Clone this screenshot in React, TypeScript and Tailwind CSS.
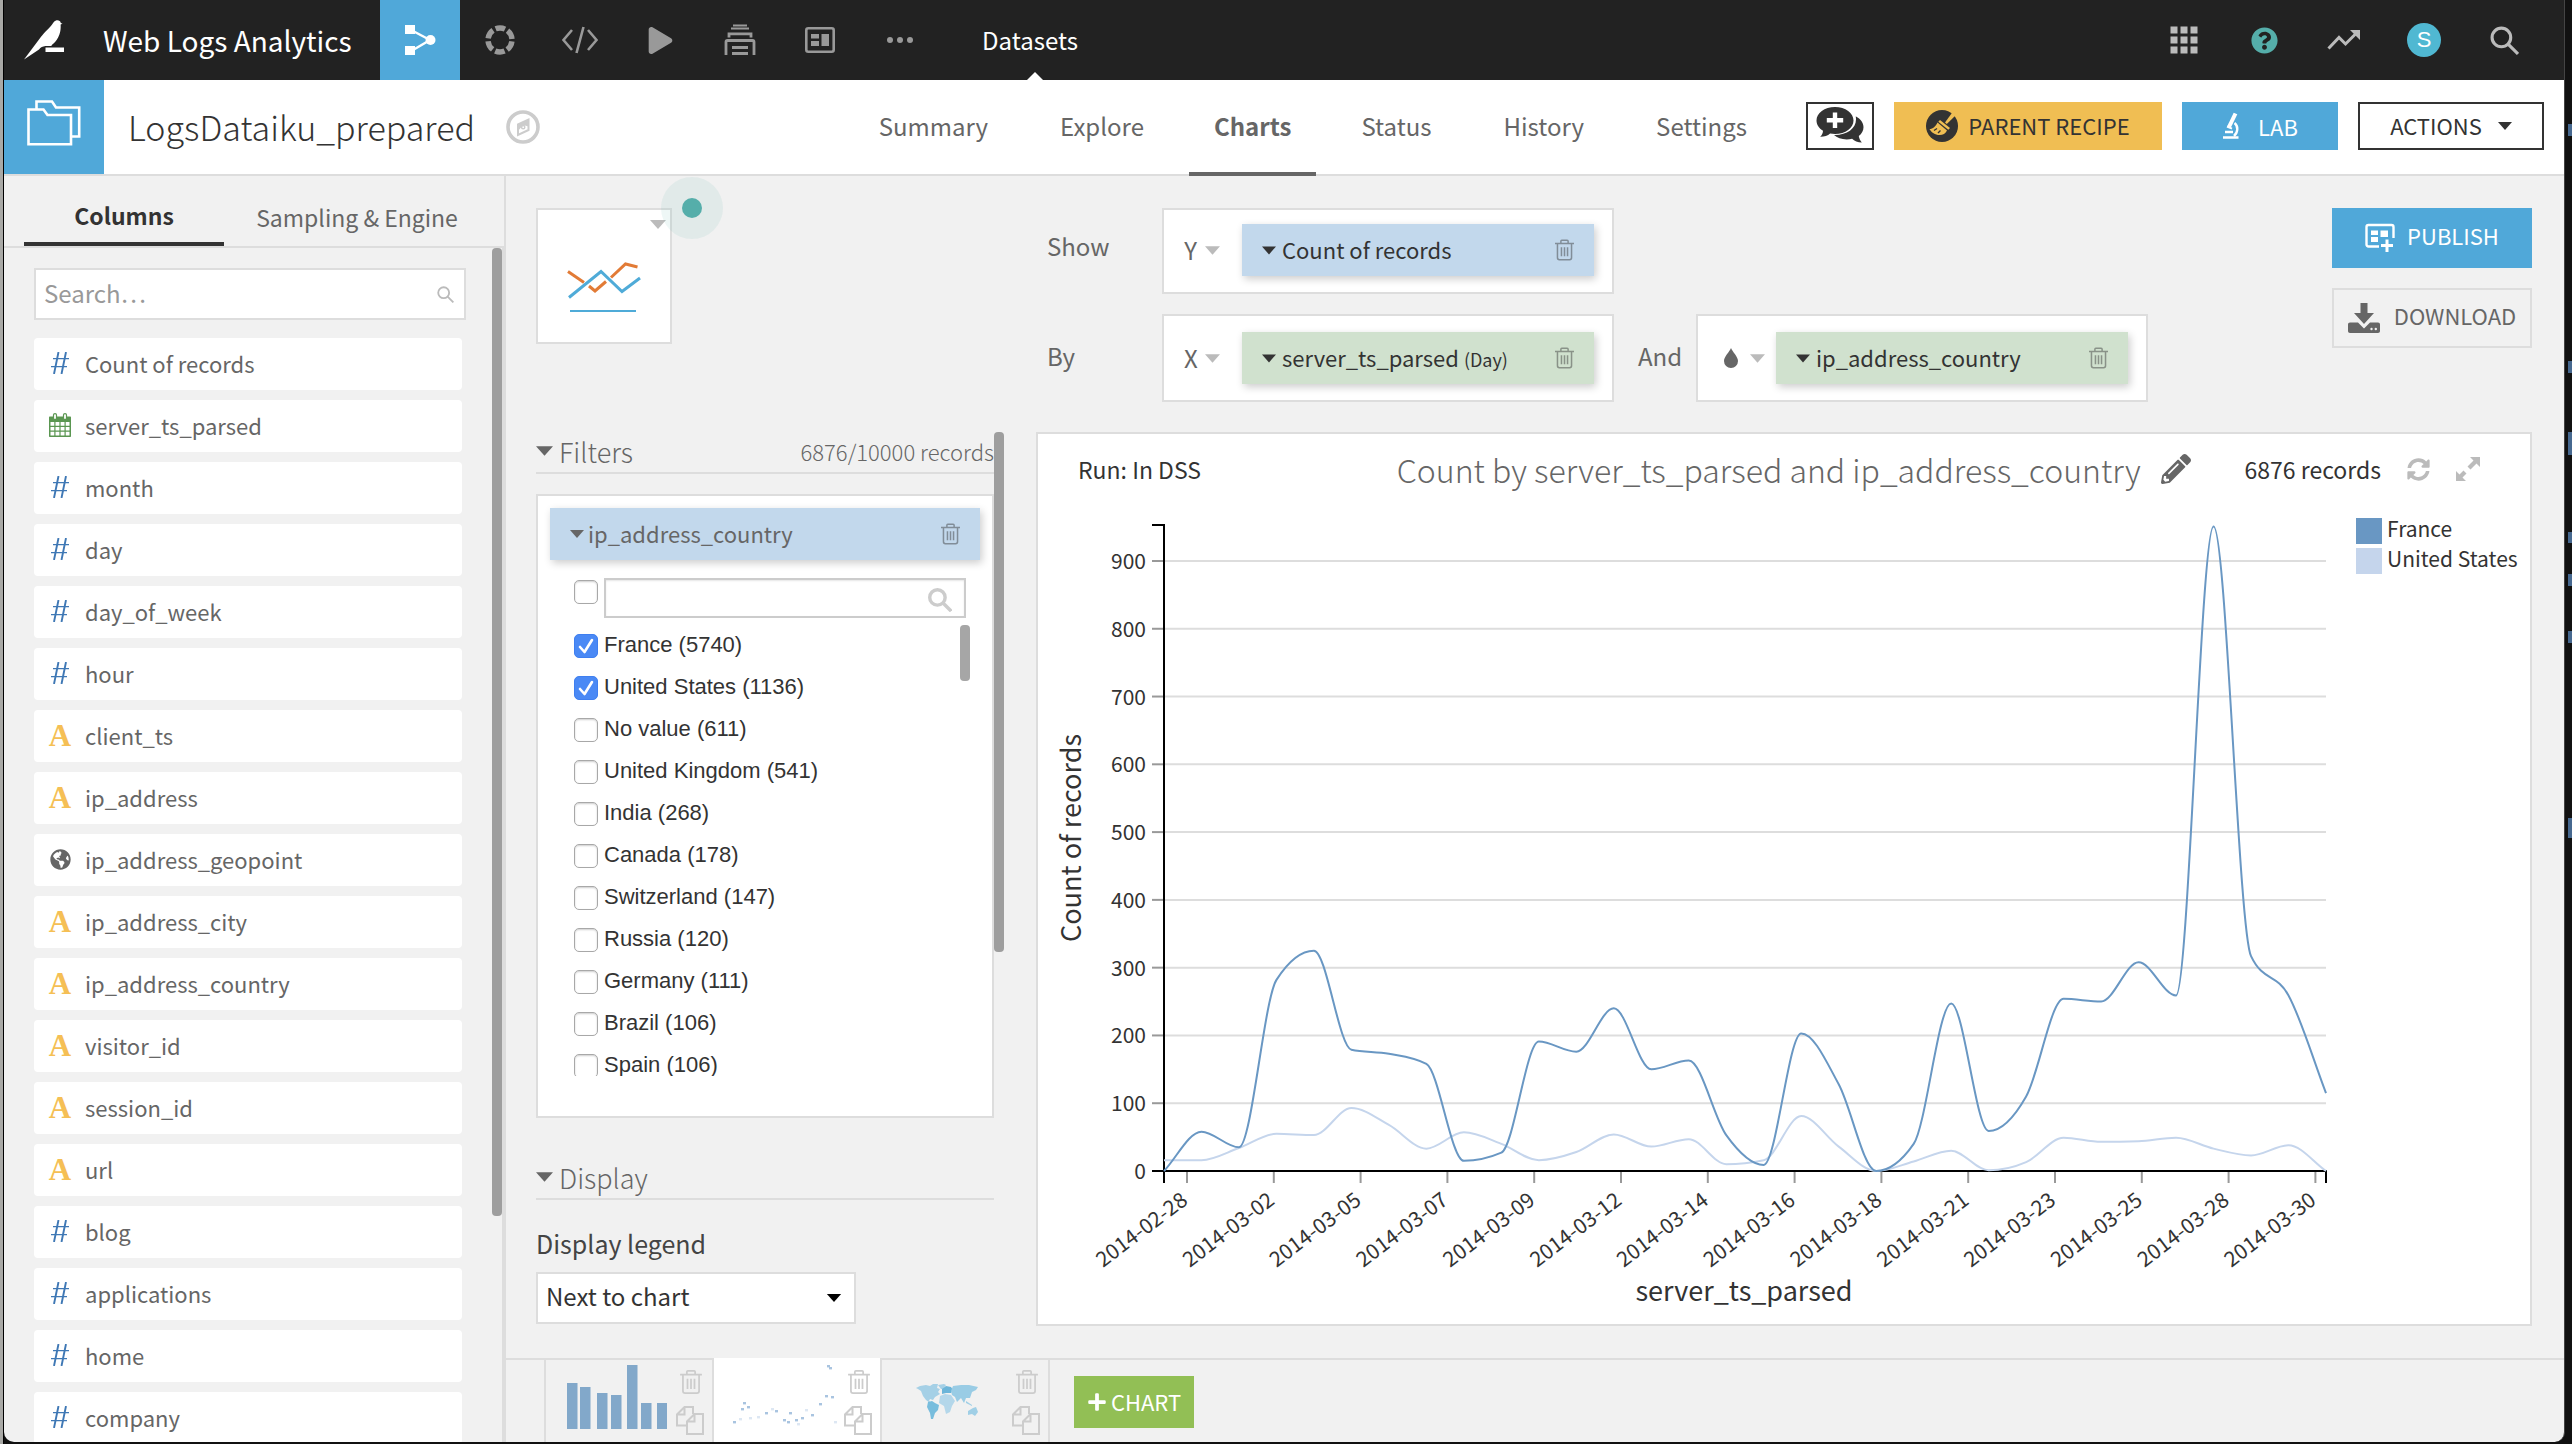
import { useState } from 'react';
import type { ReactNode } from 'react';
import { FaGlobeAmericas, FaPencilAlt, FaPlay, FaPlus, FaQuestionCircle, FaSyncAlt } from 'react-icons/fa';

type ColumnType = 'number' | 'date' | 'text' | 'geo';

interface Column {
  name: string;
  type: ColumnType;
}

const COLUMNS: Column[] = [
  { name: 'Count of records', type: 'number' },
  { name: 'server_ts_parsed', type: 'date' },
  { name: 'month', type: 'number' },
  { name: 'day', type: 'number' },
  { name: 'day_of_week', type: 'number' },
  { name: 'hour', type: 'number' },
  { name: 'client_ts', type: 'text' },
  { name: 'ip_address', type: 'text' },
  { name: 'ip_address_geopoint', type: 'geo' },
  { name: 'ip_address_city', type: 'text' },
  { name: 'ip_address_country', type: 'text' },
  { name: 'visitor_id', type: 'text' },
  { name: 'session_id', type: 'text' },
  { name: 'url', type: 'text' },
  { name: 'blog', type: 'number' },
  { name: 'applications', type: 'number' },
  { name: 'home', type: 'number' },
  { name: 'company', type: 'number' },
];

const COUNTRIES = [
  { name: 'France', count: 5740 },
  { name: 'United States', count: 1136 },
  { name: 'No value', count: 611 },
  { name: 'United Kingdom', count: 541 },
  { name: 'India', count: 268 },
  { name: 'Canada', count: 178 },
  { name: 'Switzerland', count: 147 },
  { name: 'Russia', count: 120 },
  { name: 'Germany', count: 111 },
  { name: 'Brazil', count: 106 },
  { name: 'Spain', count: 106 },
];

const NAV_TABS = ['Summary', 'Explore', 'Charts', 'Status', 'History', 'Settings'];

const FRANCE = [
  0, 58, 35, 282, 325, 179, 173, 158, 15, 27, 191, 176, 240, 150, 163, 53, 9, 203, 128, 0, 40, 247, 59, 110, 254, 250,
  308, 259, 951, 317, 259, 115,
];
const UNITED_STATES = [
  16, 16, 34, 55, 53, 93, 68, 33, 57, 40, 16, 28, 54, 36, 47, 10, 16, 81, 36, 0, 14, 30, 1, 13, 49, 43, 44, 49, 33, 23,
  38, 0,
];

const DATES = [
  '2014-02-28', '2014-03-02', '2014-03-05', '2014-03-07', '2014-03-09', '2014-03-12', '2014-03-14',
  '2014-03-16', '2014-03-18', '2014-03-21', '2014-03-23', '2014-03-25', '2014-03-28', '2014-03-30',
];

/* ---------- icons ---------- */

function Caret({ className = '' }: { className?: string }) {
  return (
    <svg viewBox="0 0 16 9" className={`shrink-0 ${className}`} fill="currentColor" aria-hidden="true">
      <path d="M0 0h16L8 9z" />
    </svg>
  );
}

function TrashIcon({ className = '' }: { className?: string }) {
  return (
    <svg viewBox="0 0 20 22" className={className} fill="none" stroke="currentColor" strokeWidth="1.6" aria-hidden="true">
      <path d="M0 4.2h20M6.2 4V1.8c0-.6.4-1 1-1h5.6c.6 0 1 .4 1 1V4M2.6 4.5v14.700c0 1.100.9 2 2 2h10.800c1.100 0 2-.9 2-2V4.500" />
      <path d="M6.800 8v9.500M10 8v9.500M13.200 8v9.500" />
    </svg>
  );
}

function CopyIcon({ className = '' }: { className?: string }) {
  return (
    <svg viewBox="0 0 28 29" className={className} fill="none" stroke="currentColor" strokeWidth="2" aria-hidden="true">
      <path d="M11 19.500H1V8.500L8.500 1H17v7M8.500 1v7.500H1" />
      <path d="M18.500 8H27v20H11V15.500zM18.500 8v7.500H11" />
    </svg>
  );
}

function SearchIcon({ className = '', strokeWidth = 3 }: { className?: string; strokeWidth?: number }) {
  return (
    <svg viewBox="0 0 28 28" className={className} fill="none" stroke="currentColor" strokeWidth={strokeWidth} aria-hidden="true">
      <circle cx="11" cy="11" r="9" />
      <path d="M17.500 17.500L27 27" />
    </svg>
  );
}

function BirdLogo() {
  return (
    <svg viewBox="0 0 42 40" className="h-10 w-[42px]" fill="#fff" aria-hidden="true">
      <path d="M33 0.500c2.500-.6 4.500.6 4.800 2.400l1.700.9-1.900.8c.3 3.500-.2 7-1.200 10-1.400 4-3.400 7-6.400 9.500-1.200 1-1.600 1.400-1.500 1.900h-6c-3 .3-4.800 1.400-6.500 3.400L1 39.500 16 19.500C20.500 13 25 9.500 28.300 5.500 30 3.300 30.800 1.200 33 .5z" />
      <path d="M22.500 27.500H41V32H22.500z" />
    </svg>
  );
}

function FlowIcon() {
  return (
    <svg viewBox="0 0 32 30" className="h-[30px] w-8" fill="#fff" aria-hidden="true">
      <path d="M1 0h10v9H1zM1 21h10v9H1z" />
      <circle cx="26.500" cy="15" r="5" />
      <path d="M9 6l17 9-17 10" fill="none" stroke="#fff" strokeWidth="2.400" />
    </svg>
  );
}

function SegmentedCircleIcon() {
  return (
    <svg viewBox="0 0 30 30" className="size-[30px]" fill="none" stroke="currentColor" strokeWidth="5.400" aria-hidden="true">
      <circle cx="15" cy="15" r="12" strokeDasharray="9.600 2.966" strokeDashoffset="-1.480" />
    </svg>
  );
}

function CodeIcon() {
  return (
    <svg viewBox="0 0 36 28" className="h-7 w-9" fill="none" stroke="currentColor" strokeWidth="2.600" aria-hidden="true">
      <path d="M10 4L1.500 14 10 24M26 4l8.500 10L26 24M21.500 1l-7 26" />
    </svg>
  );
}

function StackIcon() {
  return (
    <svg viewBox="0 0 32 32" className="size-8" fill="none" stroke="currentColor" strokeWidth="2.800" aria-hidden="true">
      <path d="M9 1.500h14M7 4.500h18" strokeWidth="2" />
      <path d="M5 13.500V9.800h22v3.700" />
      <path d="M2 31V18c0-1 .5-1.500 1.500-1.500h25c1 0 1.500.5 1.500 1.500v13" />
      <path d="M8 23.500h16M8 29.500h16" />
    </svg>
  );
}

function DashboardIcon() {
  return (
    <svg viewBox="0 0 30 26" className="h-[26px] w-[30px]" fill="currentColor" aria-hidden="true">
      <rect x="1.300" y="1.300" width="27.400" height="23.400" rx="2" fill="none" stroke="currentColor" strokeWidth="2.600" />
      <path d="M6 7h8v4.500H6zM6 14h8v5H6zM16.500 7H24v12h-7.500z" />
    </svg>
  );
}

function GridIcon() {
  return (
    <svg viewBox="0 0 28 28" className="size-7" fill="currentColor" aria-hidden="true">
      {[0, 10, 20].map((y) => [0, 10, 20].map((x) => <rect key={`${x}-${y}`} x={x + 0.5} y={y + 0.5} width="7" height="7" />))}
    </svg>
  );
}

function TrendIcon() {
  return (
    <svg viewBox="0 0 34 22" className="h-[22px] w-[34px]" aria-hidden="true">
      <path d="M1.500 19.500L12 8.500l6.500 6.500L30 3.500" fill="none" stroke="currentColor" strokeWidth="3" />
      <path d="M23 1h10v10z" fill="currentColor" />
    </svg>
  );
}

function FoldersIcon() {
  return (
    <svg viewBox="0 0 54 46" className="h-[46px] w-[54px]" fill="none" stroke="#fff" strokeWidth="2.600" aria-hidden="true">
      <path d="M1.500 9.500h15l4 5.500h23.500v29.200H1.500z" />
      <path d="M9.500 9V1.500H25l4 6h23.200v29H45" />
    </svg>
  );
}

function CompassIcon() {
  return (
    <svg viewBox="0 0 34 34" className="size-[34px]" fill="none" stroke="#ccc" aria-hidden="true">
      <circle cx="17" cy="17" r="15" strokeWidth="3.600" />
      <path d="M22.500 9.500v10.500L12 25V14.500z" strokeWidth="2" />
      <path d="M22.500 9.500v7L17 15l-5 6v-6.500z" fill="#ccc" stroke="none" />
      <circle cx="17.200" cy="17.200" r="1.600" fill="#fff" strokeWidth="1.500" />
    </svg>
  );
}

function CommentsIcon() {
  return (
    <svg viewBox="0 0 48 38" className="h-[38px] w-12" fill="#333" aria-hidden="true">
      <path d="M40 9.500c4.500 2.400 7.500 6.300 7.500 10.700 0 3.400-1.800 6.500-4.700 8.800.3 2.500 1.500 4.500 3 6.600-4 0-7.500-1.600-9.700-3.800-1.700.4-3.500.6-5.400.6-5.200 0-9.800-1.700-12.700-4.400 12.500.3 22-6.300 22-15.500 0-1 0-2-.3-3z" />
      <path d="M19 0c10.500 0 18.500 6 18.500 13.500S29.500 27 19 27c-1.700 0-3.300-.2-4.900-.5-2.400 2.200-6 3.400-9.900 3.300 1.800-1.600 2.700-3.700 2.800-6C3 21.300.5 17.600.5 13.500.5 6 8.500 0 19 0z" />
      <path d="M16.800 5.500h4.400V11h6v4.400h-6V21h-4.400v-5.600h-6V11h6z" fill="#fff" />
    </svg>
  );
}

function BroomIcon() {
  return (
    <svg viewBox="0 0 32 32" className="size-8" aria-hidden="true">
      <circle cx="16" cy="16" r="16" fill="#333" />
      <path d="M27 1.500L19 12.500l1.800 1.500L30 5z" fill="#f0be53" />
      <path d="M14 10l10 8-1.700 1.700-10-8z" fill="#f0be53" />
      <path d="M11.500 12.500l9.500 8c-1.500 3-4 4.500-7.500 4.500C9 25 5.500 22.500 3.500 19c3.500 0 6-2.500 8-6.500z" fill="#f0be53" />
      <path d="M8 20.500l3-2M12 23l2.500-2.500" stroke="#333" strokeWidth="1.400" />
    </svg>
  );
}

function MicroscopeIcon() {
  return (
    <svg viewBox="0 0 18 28" className="h-7 w-[18px]" fill="none" stroke="#fff" aria-hidden="true">
      <path d="M13.500 1.500L7 15" strokeWidth="4" />
      <path d="M5 14.500l5 2.200" strokeWidth="2" />
      <path d="M12.500 11c4 3 3.600 9.500-.5 13" strokeWidth="2.400" />
      <path d="M1 25.500h15.500M3 20h8" strokeWidth="2.400" />
    </svg>
  );
}

function PublishIcon() {
  return (
    <svg viewBox="0 0 30 30" className="size-[30px]" fill="#fff" aria-hidden="true">
      <path d="M14 23.500H3.500c-1.200 0-2-.8-2-2V4c0-1.200.8-2 2-2h23c1.200 0 2 .8 2 2v11" fill="none" stroke="#fff" strokeWidth="2.400" />
      <path d="M6 7.500h7V12H6zM6 14h7v5H6zM15.500 7.500H23v6.500h-7.500zM20.500 16.500h3v4.500H28v3h-4.500V29h-3v-5H16v-3h4.500z" />
    </svg>
  );
}

function DownloadIcon() {
  return (
    <svg viewBox="0 0 32 30" className="h-[30px] w-8" fill="#666" aria-hidden="true">
      <path d="M12.500 0h7v10H26l-10 11L6 10h6.500z" />
      <path d="M2 19.500h8l6 6 6-6h8c1.200 0 2 .8 2 2v6.500c0 1.200-.8 2-2 2H2c-1.200 0-2-.8-2-2v-6.500c0-1.200.8-2 2-2z" />
      <circle cx="23.500" cy="26" r="1.200" fill="#f1f1f1" />
      <circle cx="27.800" cy="26" r="1.200" fill="#f1f1f1" />
    </svg>
  );
}

function ExpandIcon() {
  return (
    <svg viewBox="0 0 24 24" className="size-6" aria-hidden="true" fill="currentColor">
      <path d="M14 0h10v10l-3.500-3.500-6 6-3-3 6-6zM0 24V14l3.500 3.500 4-4 3 3-4 4L10 24z" />
    </svg>
  );
}

function CalendarIcon() {
  return (
    <svg viewBox="0 0 22 24" className="h-6 w-[22px]" aria-hidden="true">
      <path d="M1 3.500h20c.6 0 1 .4 1 1V23c0 .6-.4 1-1 1H1c-.6 0-1-.4-1-1V4.500c0-.6.400-1 1-1z" fill="#5a9651" />
      <path d="M1.500 9h3.800v3.700H1.500zM6.500 9h3.900v3.700H6.500zM11.600 9h3.900v3.700h-3.900zM16.700 9h3.800v3.700h-3.800zM1.500 13.900h3.800v3.700H1.500zM6.500 13.900h3.900v3.700H6.500zM11.600 13.900h3.900v3.700h-3.900zM16.700 13.900h3.800v3.700h-3.800zM1.500 18.800h3.800v3.700H1.500zM6.500 18.800h3.900v3.700H6.500zM11.600 18.800h3.900v3.700h-3.900zM16.700 18.800h3.800v3.700h-3.800z" fill="#fff" />
      <rect x="4.500" y=".6" width="3" height="6" rx="1.500" fill="#fff" stroke="#5a9651" strokeWidth="1.200" />
      <rect x="14.500" y=".6" width="3" height="6" rx="1.500" fill="#fff" stroke="#5a9651" strokeWidth="1.200" />
    </svg>
  );
}

function LinesChartIcon() {
  return (
    <svg viewBox="0 0 76 52" className="h-[52px] w-[76px]" fill="none" aria-hidden="true">
      <path d="M2 9.500l16 11M23 24l6 5 11-9.500M45 15.500L59.500 2l12 3" stroke="#e27b36" strokeWidth="3" />
      <path d="M3 35.500L35 9.500l21 20L74 16" stroke="#4fabd8" strokeWidth="3" />
      <path d="M4 49h66" stroke="#4fabd8" strokeWidth="2.200" />
    </svg>
  );
}

function ColumnTypeIcon({ type }: { type: ColumnType }) {
  if (type === 'date') return <CalendarIcon />;
  if (type === 'geo') return <FaGlobeAmericas className="size-[21px] text-[#666]" />;
  if (type === 'text') {
    return <span className="[font-family:'Liberation_Serif',serif] text-[31px] leading-none font-bold text-[#f5bf55]">A</span>;
  }
  return (
    <svg viewBox="0 0 18 22" className="h-[22px] w-[18px]" fill="none" stroke="#3f78b5" aria-hidden="true">
      <path d="M7.500 0L3 22M15 0l-4.500 22" strokeWidth="1.900" />
      <path d="M2 6.700h16M0 14.700h16" strokeWidth="1.300" />
    </svg>
  );
}

/* ---------- shared pieces ---------- */

interface CheckboxProps {
  checked: boolean;
  onChange: () => void;
  label: string;
  id?: string;
}

function Checkbox({ checked, onChange, label, id }: CheckboxProps) {
  return (
    <span className="relative flex size-6 shrink-0">
      <input
        id={id}
        type="checkbox"
        aria-label={label}
        checked={checked}
        onChange={onChange}
        className="size-6 appearance-none rounded-[5px] border border-[#a8a8a8] bg-white shadow-[inset_0_1px_2px_rgba(0,0,0,0.2)] checked:border-[#3f7ff0] checked:bg-[#4a89f5] checked:shadow-none"
      />
      {checked && (
        <svg viewBox="0 0 24 24" className="pointer-events-none absolute inset-0 size-6" fill="none" stroke="#fff" strokeWidth="2.600">
          <path d="M6 13l4.500 5L18 6" strokeLinecap="round" strokeLinejoin="round" />
        </svg>
      )}
    </span>
  );
}

interface AxisSlotProps {
  axis: ReactNode;
  color: string;
  children: ReactNode;
}

function AxisSlot({ axis, color, children }: AxisSlotProps) {
  return (
    <div className="flex w-[452px] items-end border-2 border-[#ddd] bg-white pr-[18px] pb-4 pl-5">
      <button className="flex h-[52px] flex-1 items-center gap-2 text-[#666]">
        {axis}
        <Caret className="h-[9px] w-[15px] text-[#bbb]" />
      </button>
      <div className={`flex h-[52px] w-[352px] items-center pr-5 pl-5 text-[22px] shadow-[2px_3px_8px_rgba(0,0,0,0.2)] ${color}`}>
        <button className="flex flex-1 items-center gap-1.5 text-[#333]">
          <Caret className="h-[9px] w-[14px]" />
          <span className="pb-0.5">{children}</span>
        </button>
        <button aria-label="Remove" className="text-[#333]/45">
          <TrashIcon className="h-[22px] w-[19px]" />
        </button>
      </div>
    </div>
  );
}

/* ---------- bars at the top ---------- */

function TopBar() {
  return (
    <header className="flex h-20 shrink-0 items-center bg-[#222] text-[#999]">
      <a href="#home" aria-label="Home" className="ml-[19px]">
        <BirdLogo />
      </a>
      <a href="#project" className="ml-[38px] w-[277px] text-[28px] whitespace-nowrap text-white">
        Web Logs Analytics
      </a>
      <nav className="flex h-20 items-center" aria-label="Project">
        <button aria-label="Flow" className="flex h-20 w-20 items-center justify-center bg-[#50a8d9]">
          <FlowIcon />
        </button>
        <button aria-label="Analyses" className="flex w-20 justify-center"><SegmentedCircleIcon /></button>
        <button aria-label="Code" className="flex w-20 justify-center"><CodeIcon /></button>
        <button aria-label="Jobs" className="flex w-20 justify-center"><FaPlay className="size-[27px]" /></button>
        <button aria-label="Deploy" className="flex w-20 justify-center"><StackIcon /></button>
        <button aria-label="Dashboards" className="flex w-20 justify-center"><DashboardIcon /></button>
        <button aria-label="More" className="flex w-20 justify-center gap-1">
          <span className="size-1.5 rounded-full bg-current" />
          <span className="size-1.5 rounded-full bg-current" />
          <span className="size-1.5 rounded-full bg-current" />
        </button>
      </nav>
      <a href="#datasets" className="relative ml-[42px] flex h-20 items-center text-[24px] text-white">
        Datasets
        <svg viewBox="0 0 16 8" className="absolute bottom-0 left-[45px] h-2 w-4" fill="#fff" aria-hidden="true">
          <path d="M0 8h16L8 0z" />
        </svg>
      </a>
      <div className="ml-auto flex items-center pr-5 text-[#bbb]">
        <button aria-label="Applications" className="flex w-20 justify-center"><GridIcon /></button>
        <button aria-label="Help" className="flex w-20 justify-center text-[#55aeaa]"><FaQuestionCircle className="size-[27px]" /></button>
        <button aria-label="Activity" className="flex w-20 justify-center"><TrendIcon /></button>
        <button className="mx-[23px] flex size-[34px] items-center justify-center rounded-full bg-[#50b8d2] [font-family:'Liberation_Sans',sans-serif] text-[22px] text-white">
          S
        </button>
        <button aria-label="Search" className="flex w-20 justify-center"><SearchIcon className="size-[29px]" /></button>
      </div>
    </header>
  );
}

function DatasetBar() {
  return (
    <div className="flex h-24 shrink-0 items-stretch border-b-2 border-[#ddd] bg-white">
      <div className="flex w-[100px] justify-center bg-[#50a8d9] pt-5">
        <FoldersIcon />
      </div>
      <div className="flex items-center gap-[31px] pl-6">
        <h1 className="text-[34px] font-light whitespace-nowrap text-[#333]">LogsDataiku_prepared</h1>
        <button aria-label="Navigate around"><CompassIcon /></button>
      </div>
      <nav className="ml-auto flex gap-[18px]" aria-label="Dataset">
        {NAV_TABS.map((tab) => (
          <a
            key={tab}
            href={`#${tab.toLowerCase()}`}
            className={`-mb-0.5 flex items-center border-b-4 text-[24px] text-[#666] ${
              tab === 'Charts' ? 'border-[#666] px-[25px] font-bold' : 'border-transparent px-[27px]'
            }`}
          >
            {tab}
          </a>
        ))}
      </nav>
      <div className="ml-[32px] flex gap-5 pt-[22px] pr-5 text-[22px]">
        <button aria-label="Discussions" className="flex h-12 w-[68px] items-center justify-center border-2 border-[#333]">
          <CommentsIcon />
        </button>
        <button className="flex h-12 w-[268px] items-center justify-center gap-2.5 bg-[#f0be53] text-[#333]">
          <BroomIcon />
          <span className="pb-0.5">PARENT RECIPE</span>
        </button>
        <button className="flex h-12 w-[156px] items-center justify-center gap-[18px] bg-[#50a8d9] text-white">
          <MicroscopeIcon />
          LAB
        </button>
        <button className="flex h-12 w-[186px] items-center justify-center gap-4 border-2 border-[#333] text-[#333]">
          <span className="pb-0.5">ACTIONS</span>
          <Caret className="h-2 w-3.5" />
        </button>
      </div>
    </div>
  );
}

/* ---------- columns sidebar ---------- */

function ColumnsSidebar() {
  const [query, setQuery] = useState('');

  return (
    <aside className="flex w-[502px] shrink-0 flex-col border-r-2 border-[#ddd]">
      <div className="flex h-[72px] shrink-0 border-b-2 border-[#ddd] pl-5 text-[23px]">
        <button className="w-[200px] border-b-4 border-[#333] pt-3 font-bold text-[#333]">Columns</button>
        <button className="flex-1 pt-3 pr-3.5 text-[#666]">Sampling &amp; Engine</button>
      </div>
      <div className="flex min-h-0 flex-1">
        <div className="flex min-w-0 flex-1 flex-col pt-5 pl-[30px]">
          <div className="relative mr-[26px]">
            <input
              type="text"
              aria-label="Search columns"
              placeholder="Search…"
              value={query}
              onChange={(e) => setQuery(e.target.value)}
              className="block h-[52px] w-full border-2 border-[#ddd] bg-white px-2 pb-1 text-[24px] text-[#333] placeholder:text-[#999] focus:outline-none"
            />
            <SearchIcon className="absolute top-[18px] right-3 size-[17px] text-[#bbb]" />
          </div>
          <ul className="mt-[18px] mr-[30px] flex min-h-0 flex-1 flex-col gap-2.5 overflow-hidden">
            {COLUMNS.filter((c) => c.name.includes(query)).map((column) => (
              <li key={column.name} className="flex h-[52px] shrink-0 items-center rounded bg-white pb-0.5 pl-[13px] text-[22px] text-[#666]">
                <span className="flex h-7 w-[26px] items-center justify-center">
                  <ColumnTypeIcon type={column.type} />
                </span>
                <span className="ml-3">{column.name}</span>
              </li>
            ))}
          </ul>
        </div>
        <div className="h-[968px] w-2.5 rounded bg-[#9e9e9e]" />
        <div className="w-0.5 bg-[#ddd]" />
      </div>
    </aside>
  );
}

/* ---------- filters and display options ---------- */

function SectionTitle({ title, note }: { title: string; note?: string }) {
  return (
    <div className="flex h-[42px] items-center border-b-2 border-[#ddd] pb-0.5 text-[#666]">
      <button className="flex items-center gap-1.5 text-[27px] font-light">
        <Caret className="h-2.5 w-[17px]" />
        {title}
      </button>
      {note && <span className="ml-auto text-[22px] font-light">{note}</span>}
    </div>
  );
}

function FilterCard() {
  const [selected, setSelected] = useState<string[]>(['France', 'United States']);
  const allSelected = selected.length === COUNTRIES.length;

  const toggle = (name: string) =>
    setSelected((prev) => (prev.includes(name) ? prev.filter((n) => n !== name) : [...prev, name]));

  return (
    <div className="mt-5 border-2 border-[#ddd] bg-white px-3 pt-3 pb-10">
      <div className="flex h-[52px] items-center bg-[#c2d8ec] pr-5 pl-5 shadow-[2px_3px_8px_rgba(0,0,0,0.2)]">
        <button className="flex flex-1 items-center gap-1 text-[22px] text-[#666]">
          <Caret className="h-2 w-3.5" />
          <span className="pb-0.5">ip_address_country</span>
        </button>
        <button aria-label="Remove filter" className="text-[#333]/45">
          <TrashIcon className="h-[22px] w-[19px]" />
        </button>
      </div>
      <div className="mt-[18px] flex items-start gap-1.5 pr-3.5 pl-6">
        <span className="pt-0.5">
          <Checkbox
            label="Select all"
            checked={allSelected}
            onChange={() => setSelected(allSelected ? [] : COUNTRIES.map((c) => c.name))}
          />
        </span>
        <div className="relative flex-1">
          <input
            type="text"
            aria-label="Filter values"
            className="block h-10 w-full border-2 border-[#ccc] px-2 text-[20px] shadow-[inset_0_1px_2px_rgba(0,0,0,0.1)] focus:outline-none"
          />
          <SearchIcon className="absolute top-2.5 right-3.5 size-6 text-[#ccc]" strokeWidth={4} />
        </div>
      </div>
      <div className="mt-[7px] flex h-[451px] justify-between overflow-hidden pr-2.5 pl-6">
        <ul className="[font-family:'Liberation_Sans',Arial,sans-serif] text-[22px] text-[#333]">
          {COUNTRIES.map(({ name, count }) => (
            <li key={name} className="flex h-[42px] items-center gap-1.5">
              <Checkbox id={`filter-${name}`} label={name} checked={selected.includes(name)} onChange={() => toggle(name)} />
              <label htmlFor={`filter-${name}`} className="pb-0.5">{`${name} (${count})`}</label>
            </li>
          ))}
        </ul>
        <div className="h-14 w-2.5 rounded bg-[#a6a6a6]" />
      </div>
    </div>
  );
}

function ChartOptions() {
  return (
    <div className="flex w-[498px] shrink-0 flex-col pt-8 pl-[30px]">
      <button aria-label="Chart type: lines" className="relative flex size-[136px] items-center justify-center border-2 border-[#ddd] bg-white pt-6">
        <LinesChartIcon />
        <Caret className="absolute top-2.5 right-1 h-[9px] w-4 text-[#bbb]" />
        <span className="absolute -top-[33px] -right-[53px] flex size-[62px] items-center justify-center rounded-full bg-[#55aeaa]/10">
          <span className="size-5 rounded-full bg-[#55aeaa]" />
        </span>
      </button>
      <div className="mt-[88px] flex min-h-0 flex-1">
        <div className="w-[458px] overflow-hidden">
          <SectionTitle title="Filters" note="6876/10000 records" />
          <FilterCard />
          <div className="mt-10">
            <SectionTitle title="Display" />
          </div>
          <label htmlFor="legend-placement" className="mt-[22px] block text-[25px] leading-[42px] text-[#444]">
            Display legend
          </label>
          <div className="relative mt-2 w-80">
            <select
              id="legend-placement"
              className="block h-[52px] w-full appearance-none border-2 border-[#ddd] bg-white px-2 pb-1 text-[24px] text-[#333]"
            >
              <option>Next to chart</option>
            </select>
            <Caret className="pointer-events-none absolute top-[22px] right-3.5 h-2 w-4 text-black" />
          </div>
        </div>
        <div className="h-[520px] w-2.5 rounded bg-[#9e9e9e]" />
      </div>
    </div>
  );
}

/* ---------- chart ---------- */

const PLOT = { left: 126, right: 1288, top: 21, bottom: 667 };
const yScale = (v: number) => PLOT.bottom - v * 0.6778;
const xScale = (i: number) => PLOT.left + (i * (PLOT.right - PLOT.left)) / (FRANCE.length - 1);

// Monotone cubic interpolation, so that the line never overshoots its points.
function monotonePath(values: number[]) {
  const step = xScale(1) - xScale(0);
  const ys = values.map(yScale);
  const slopes = ys.slice(1).map((y, i) => (y - ys[i]) / step);
  const tangents = ys.map((_, i) => {
    if (i === 0) return slopes[0];
    if (i === ys.length - 1) return slopes[i - 1];
    const [before, after] = [slopes[i - 1], slopes[i]];
    const direction = Math.sign(before) + Math.sign(after);
    return direction * Math.min(Math.abs(before), Math.abs(after), Math.abs(before + after) / 4);
  });
  let d = `M${xScale(0)} ${ys[0]}`;
  for (let i = 1; i < ys.length; i++) {
    const c1 = ys[i - 1] + (tangents[i - 1] * step) / 3;
    const c2 = ys[i] - (tangents[i] * step) / 3;
    d += `C${xScale(i - 1) + step / 3} ${c1} ${xScale(i) - step / 3} ${c2} ${xScale(i)} ${ys[i]}`;
  }
  return d;
}

function LineChart() {
  return (
    <svg viewBox="0 0 1302 820" className="w-full" fill="#333" role="img" aria-label="Count by server_ts_parsed and ip_address_country">
      {[0, 100, 200, 300, 400, 500, 600, 700, 800, 900].map((v) => (
        <g key={v}>
          {v > 0 && <path d={`M${PLOT.left} ${yScale(v)}H${PLOT.right}`} stroke="#ddd" strokeWidth="2" />}
          {v > 0 && <path d={`M114 ${yScale(v)}h12`} stroke="#999" strokeWidth="2" />}
          <text x="108" y={yScale(v) + 8} textAnchor="end" className="text-[21px]">{v}</text>
        </g>
      ))}
      {DATES.map((date, i) => {
        const x = 149 + i * 86.8;
        return (
          <g key={date}>
            <path d={`M${x} ${PLOT.bottom}v12`} stroke="#999" strokeWidth="2" />
            <text textAnchor="end" className="text-[21px]" transform={`translate(${x + 2} ${PLOT.bottom + 32}) rotate(-37)`}>
              {date}
            </text>
          </g>
        );
      })}
      <path d={`M114 ${PLOT.top}h12V${PLOT.bottom + 12}M114 ${PLOT.bottom}H${PLOT.right}v12`} fill="none" stroke="#000" strokeWidth="2" />
      <path d={monotonePath(UNITED_STATES)} fill="none" stroke="#c5d5ec" strokeWidth="2" />
      <path d={monotonePath(FRANCE)} fill="none" stroke="#6997c3" strokeWidth="2" />
      <text textAnchor="middle" className="text-[27px]" transform="translate(43 334) rotate(-90)">Count of records</text>
      <text x="706" y="797" textAnchor="middle" className="text-[27px]">server_ts_parsed</text>
    </svg>
  );
}

function ChartCard() {
  return (
    <section className="mt-[30px] border-2 border-[#ddd] bg-white">
      <div className="flex h-[70px] items-center pr-[50px] pl-10 text-[23px] text-[#333]">
        <span>Run: In DSS</span>
        <h2 className="ml-auto text-[32px] font-light text-[#666]">Count by server_ts_parsed and ip_address_country</h2>
        <button aria-label="Edit title" className="ml-5 text-[#666]"><FaPencilAlt className="size-[30px]" /></button>
        <span className="ml-[54px]">6876 records</span>
        <button aria-label="Refresh" className="ml-[26px] text-[#bbb]"><FaSyncAlt className="size-[23px]" /></button>
        <button aria-label="Full screen" className="ml-[26px] text-[#bbb]"><ExpandIcon /></button>
      </div>
      <div className="flex items-start">
        <div className="min-w-0 flex-1">
          <LineChart />
        </div>
        <ul className="w-[190px] shrink-0 pt-3.5 pl-4 text-[21px] text-[#333]">
          <li className="flex h-[30px] items-start gap-[5px] leading-5">
            <span className="size-[26px] bg-[#6997c3]" />
            France
          </li>
          <li className="flex h-[30px] items-start gap-[5px] leading-5">
            <span className="size-[26px] bg-[#c5d5ec]" />
            United States
          </li>
        </ul>
      </div>
    </section>
  );
}

function ChartArea() {
  return (
    <div className="ml-8 flex min-w-0 flex-1 flex-col pt-8 pr-8">
      <div className="flex items-start justify-between">
        <div className="flex flex-col gap-5 pl-[11px] text-[24px] text-[#666]">
          <div className="flex h-[86px]">
            <span className="w-[115px] leading-[76px]">Show</span>
            <AxisSlot axis={<span className="w-[13px] leading-none">Y</span>} color="bg-[#c2d8ec]">
              Count of records
            </AxisSlot>
          </div>
          <div className="flex h-[88px]">
            <span className="w-[115px] leading-[84px]">By</span>
            <AxisSlot axis={<span className="w-[13px] leading-none">X</span>} color="bg-[#d0e1ce]">
              server_ts_parsed <small className="text-[18px]">(Day)</small>
            </AxisSlot>
            <span className="w-[82px] pl-6 leading-[84px]">And</span>
            <AxisSlot
              axis={
                <svg viewBox="0 0 14 20" className="mr-1 ml-1.5 h-5 w-3.5" fill="#666" aria-label="Color">
                  <path d="M7 0c1.500 4 7 8.500 7 13a7 7 0 0 1-14 0C0 8.500 5.500 4 7 0z" />
                </svg>
              }
              color="bg-[#d0e1ce]"
            >
              ip_address_country
            </AxisSlot>
          </div>
        </div>
        <div className="flex w-[200px] flex-col gap-5 text-[22px]">
          <button className="flex h-[60px] items-center justify-center gap-3 bg-[#50a8d9] text-white">
            <PublishIcon />
            <span className="pb-1.5">PUBLISH</span>
          </button>
          <button className="flex h-[60px] items-center justify-center gap-3.5 border-2 border-[#ddd] text-[#666]">
            <DownloadIcon />
            <span className="pb-1.5">DOWNLOAD</span>
          </button>
        </div>
      </div>
      <ChartCard />
    </div>
  );
}

/* ---------- chart thumbnails ---------- */

function BarsThumbnail() {
  const bars = [
    [0, 46], [13, 42], [30, 36], [44, 34], [60, 64], [74, 26], [90, 26],
  ];
  return (
    <svg viewBox="0 0 100 66" className="h-[66px] w-[100px]" fill="#82a8ca" aria-hidden="true">
      {bars.map(([x, h]) => <rect key={x} x={x} y={66 - h} width="10.500" height={h} />)}
    </svg>
  );
}

function ScatterThumbnail() {
  const dots = [
    [0, 57, 1], [6, 54, 0], [8, 44, 1], [10, 38, 1], [14, 42, 1], [16, 53, 0], [24, 52, 0], [32, 48, 1], [38, 44, 0],
    [42, 46, 1], [50, 55, 1], [54, 57, 1], [56, 48, 1], [62, 55, 1], [64, 59, 0], [68, 53, 1], [72, 45, 0], [78, 50, 1],
    [86, 39, 1], [92, 31, 1], [98, 32, 1], [94, 1, 1], [96, 3, 1], [101, 57, 0],
  ];
  return (
    <svg viewBox="0 0 104 62" className="h-[62px] w-[104px]" aria-hidden="true">
      {dots.map(([x, y, strong]) => (
        <rect key={`${x}-${y}`} x={x} y={y} width="3" height="2.400" fill={strong ? '#a9c4e0' : '#dde7f3'} />
      ))}
    </svg>
  );
}

function MapThumbnail() {
  return (
    <svg viewBox="0 0 62 36" className="mt-3 mr-3 h-9 w-[62px]" aria-hidden="true">
      <path d="M0 4l4-2 6-1 4 1 3-2 5 0-1 4 3 1-2 3 2 2-5 3-2 3-3-1-1 2 3 2-2 0-4-3-3-4-2-5-3-2z" fill="#a5d0e6" />
      <path d="M22 1l6-1 2 1-3 4-2 0z" fill="#a5d0e6" />
      <path d="M12 18l4-1 3 2 4 2-1 5-3 3-2 6-2 0-1-6-3-6z" fill="#78bddd" />
      <path d="M26 5l4-3 5 1 2 3-2 3-5 0-4 1z" fill="#6cb5d9" />
      <path d="M24 12l5-2 6 1 4 6-3 5-2 6-4 2-2-8-5-3z" fill="#b4d7ea" />
      <path d="M37 2l8-1 8 0 9 2-2 3-4 2-2 6-4 0-2 5-3-5-4 4-2-5-3-2-1-4z" fill="#99cce5" />
      <path d="M50 17l6 4 0 1-6-3zM52 27l5-3 3-1 2 5-3 4-3-2-4 1z" fill="#a0cfe6" />
    </svg>
  );
}

function ThumbnailTab({ label, active = false, children }: { label: string; active?: boolean; children: ReactNode }) {
  return (
    <div className={`-mt-0.5 flex w-[168px] justify-between border-r-2 border-[#ddd] pr-2 ${active ? 'bg-white' : 'border-t-2'}`}>
      <button aria-label={label} className="flex flex-1 items-center justify-center pb-2.5 pl-3">{children}</button>
      <div className={`flex flex-col items-end gap-3 text-[#ccc] ${active ? 'pt-3' : 'pt-2.5'}`}>
        <button aria-label={`Delete ${label}`} className="mr-0.5"><TrashIcon className="h-6 w-[22px]" /></button>
        <button aria-label={`Duplicate ${label}`}><CopyIcon className="h-[29px] w-7" /></button>
      </div>
    </div>
  );
}

function ThumbnailBar() {
  return (
    <footer className="flex h-[84px] shrink-0 border-t-2 border-[#ddd]">
      <div className="w-10 shrink-0 border-r-2 border-[#ddd]" />
      <ThumbnailTab label="Bar chart"><BarsThumbnail /></ThumbnailTab>
      <ThumbnailTab label="Line chart" active><ScatterThumbnail /></ThumbnailTab>
      <ThumbnailTab label="Map"><MapThumbnail /></ThumbnailTab>
      <button className="mt-4 ml-6 flex h-[52px] w-[120px] items-center justify-center gap-1 bg-[#92bf55] text-[22px] text-white">
        <FaPlus className="size-5" />
        <span className="pb-0.5">CHART</span>
      </button>
    </footer>
  );
}

export default function App() {
  return (
    <div className="flex h-screen overflow-hidden bg-[#111] font-['Noto_Sans_CJK_SC','Noto_Sans',sans-serif] leading-none">
      {/* Desktop that shows on the left of the window */}
      <div className="w-1 shrink-0 border-r border-black bg-[#a9a9a6]" />
      <div className="mb-0.5 flex min-w-0 flex-1 flex-col overflow-hidden rounded-b-[10px] border-r border-[#444] bg-[#f1f1f1]">
        <TopBar />
        <DatasetBar />
        <div className="flex min-h-0 flex-1">
          <ColumnsSidebar />
          <main className="flex min-w-0 flex-1 flex-col">
            <div className="flex min-h-0 flex-1">
              <ChartOptions />
              <ChartArea />
            </div>
            <ThumbnailBar />
          </main>
        </div>
      </div>
      <svg viewBox="0 0 7 1444" className="h-full w-[7px] shrink-0" fill="#46688f" aria-hidden="true">
        <path d="M3 124h4v12H3zM3 361h4v12H3zM3 432h4v23H3zM3 532h4v11H3zM3 574h4v12H3zM3 631h4v12H3zM3 818h4v20H3z" />
      </svg>
    </div>
  );
}
